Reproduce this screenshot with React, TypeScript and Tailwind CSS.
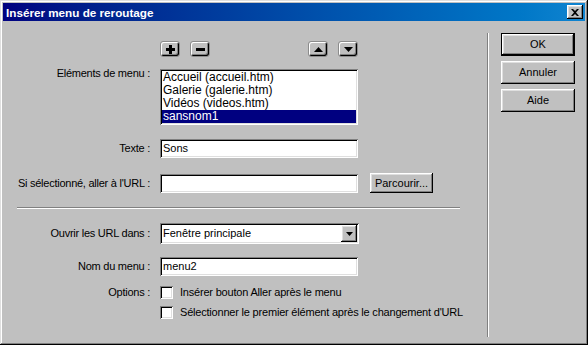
import React from 'react';

const raised = "shadow-[inset_-1px_-1px_#000,inset_1px_1px_#fff,inset_-2px_-2px_#808080,inset_2px_2px_#dfdfdf]";
const sunken = "shadow-[inset_1px_1px_#808080,inset_-1px_-1px_#fff,inset_2px_2px_#000,inset_-2px_-2px_#dfdfdf]";
const tool = "w-[20px] h-[16px] rounded-[3px] border border-[#8c8c8c] bg-[#c0c0c0] flex items-center justify-center shadow-[inset_1px_1px_#fff,inset_-1px_-1px_#000,inset_-2px_-2px_#808080]";

function Label({ children }: { children: React.ReactNode }) {
  return <div className="w-[147px] text-right whitespace-nowrap shrink-0 tracking-[-0.25px]">{children}</div>;
}

function Field({ value }: { value: string }) {
  return (
    <div className={`w-[198px] h-[19px] bg-white pl-[3px] flex items-center ml-[10px] ${sunken}`}>{value}</div>
  );
}

function Check({ text, first }: { text: string; first?: boolean }) {
  return (
    <div className="flex items-center">
      <Label>{first ? 'Options :' : ''}</Label>
      <div className={`w-[13px] h-[13px] bg-white ml-[10px] ${sunken}`} />
      <span className="ml-[7px] whitespace-nowrap tracking-[-0.2px]">{text}</span>
    </div>
  );
}

export default function App() {
  const items = ['Accueil (accueil.htm)', 'Galerie (galerie.htm)', 'Vidéos (videos.htm)', 'sansnom1'];

  return (
    <div className={`w-[588px] h-[345px] bg-[#c0c0c0] p-[3px] flex flex-col text-[11px] leading-[13px] text-black font-['Liberation_Sans',Arial,sans-serif] shadow-[inset_-1px_-1px_#000,inset_1px_1px_#dfdfdf,inset_-2px_-2px_#808080,inset_2px_2px_#fff]`}>
      <div className="h-[18px] flex items-center justify-between pl-[3px] pr-[2px] bg-gradient-to-r from-[#000080] to-[#1084d0]">
        <span className="text-white font-bold text-[11.7px]">Insérer menu de reroutage</span>
        <div className={`w-[16px] h-[14px] bg-[#c0c0c0] flex items-center justify-center ${raised}`}>
          <svg width="8" height="7" viewBox="0 0 8 7">
            <path d="M0 0h2l2 2 2-2h2L5 3.5 8 7H6L4 5 2 7H0l3-3.5z" fill="#000" />
          </svg>
        </div>
      </div>

      <div className="flex flex-1 mt-px">
        <div className="w-[484px] flex flex-col">
          <div className="flex mt-[19px] ml-[157px]">
            <div className={tool}>
              <svg width="9" height="9" viewBox="0 0 9 9"><path d="M3 0h3v3h3v3H6v3H3V6H0V3h3z" fill="#000" /></svg>
            </div>
            <div className={`${tool} ml-[10px]`}>
              <svg width="9" height="3" viewBox="0 0 9 3"><rect width="9" height="3" fill="#000" /></svg>
            </div>
            <div className={`${tool} ml-[98px]`}>
              <svg width="9" height="5" viewBox="0 0 9 5"><path d="M4.5 0L9 5H0z" fill="#000" /></svg>
            </div>
            <div className={`${tool} ml-[10px]`}>
              <svg width="9" height="5" viewBox="0 0 9 5"><path d="M0 0h9L4.5 5z" fill="#000" /></svg>
            </div>
          </div>

          <div className="flex items-start mt-[12px]">
            <div className="mt-[-2px]"><Label>Eléments de menu :</Label></div>
            <div className={`w-[198px] h-[56px] bg-white ml-[10px] p-[2px] text-[12px] leading-[13px] ${sunken}`}>
              {items.map((it, i) => (
                <div
                  key={it}
                  className={`h-[13px] pl-[1px] whitespace-nowrap ${i === 3 ? 'bg-[#000080] text-white' : ''}`}
                >
                  {it}
                </div>
              ))}
            </div>
          </div>

          <div className="flex items-center mt-[14px]">
            <Label>Texte :</Label>
            <Field value="Sons" />
          </div>

          <div className="flex items-center mt-[15px]">
            <Label>Si sélectionné, aller à l'URL :</Label>
            <Field value="" />
            <div className={`w-[63px] h-[20px] ml-[12px] flex items-center justify-center ${raised}`}>Parcourir...</div>
          </div>

          <div className="mt-[14px] ml-[14px] w-[443px] h-[2px] border-t border-t-[#808080] border-b border-b-white" />

          <div className="flex items-center mt-[14px]">
            <Label>Ouvrir les URL dans :</Label>
            <div className={`w-[199px] h-[21px] bg-white ml-[10px] pl-[3px] pr-[2px] flex items-center justify-between ${sunken}`}>
              <span>Fenêtre principale</span>
              <div className={`w-[16px] h-[17px] bg-[#c0c0c0] flex items-center justify-center ${raised}`}>
                <svg width="7" height="4" viewBox="0 0 7 4"><path d="M0 0h7L3.5 4z" fill="#000" /></svg>
              </div>
            </div>
          </div>

          <div className="flex items-center mt-[13px]">
            <Label>Nom du menu :</Label>
            <Field value="menu2" />
          </div>

          <div className="mt-[10px]">
            <Check first text="Insérer bouton Aller après le menu" />
          </div>
          <div className="mt-[7px]">
            <Check text="Sélectionner le premier élément après le changement d'URL" />
          </div>
        </div>

        <div className="w-[2px] h-[304px] mt-[11px] border-l border-l-[#808080] border-r border-r-white" />

        <div className="flex flex-col ml-[12px] mt-[11px]">
          <div className="w-[74px] h-[23px] border border-black">
            <div className={`w-full h-full flex items-center justify-center ${raised}`}>OK</div>
          </div>
          <div className={`w-[74px] h-[23px] mt-[5px] flex items-center justify-center ${raised}`}>Annuler</div>
          <div className={`w-[74px] h-[23px] mt-[5px] flex items-center justify-center ${raised}`}>Aide</div>
        </div>
      </div>
    </div>
  );
}
